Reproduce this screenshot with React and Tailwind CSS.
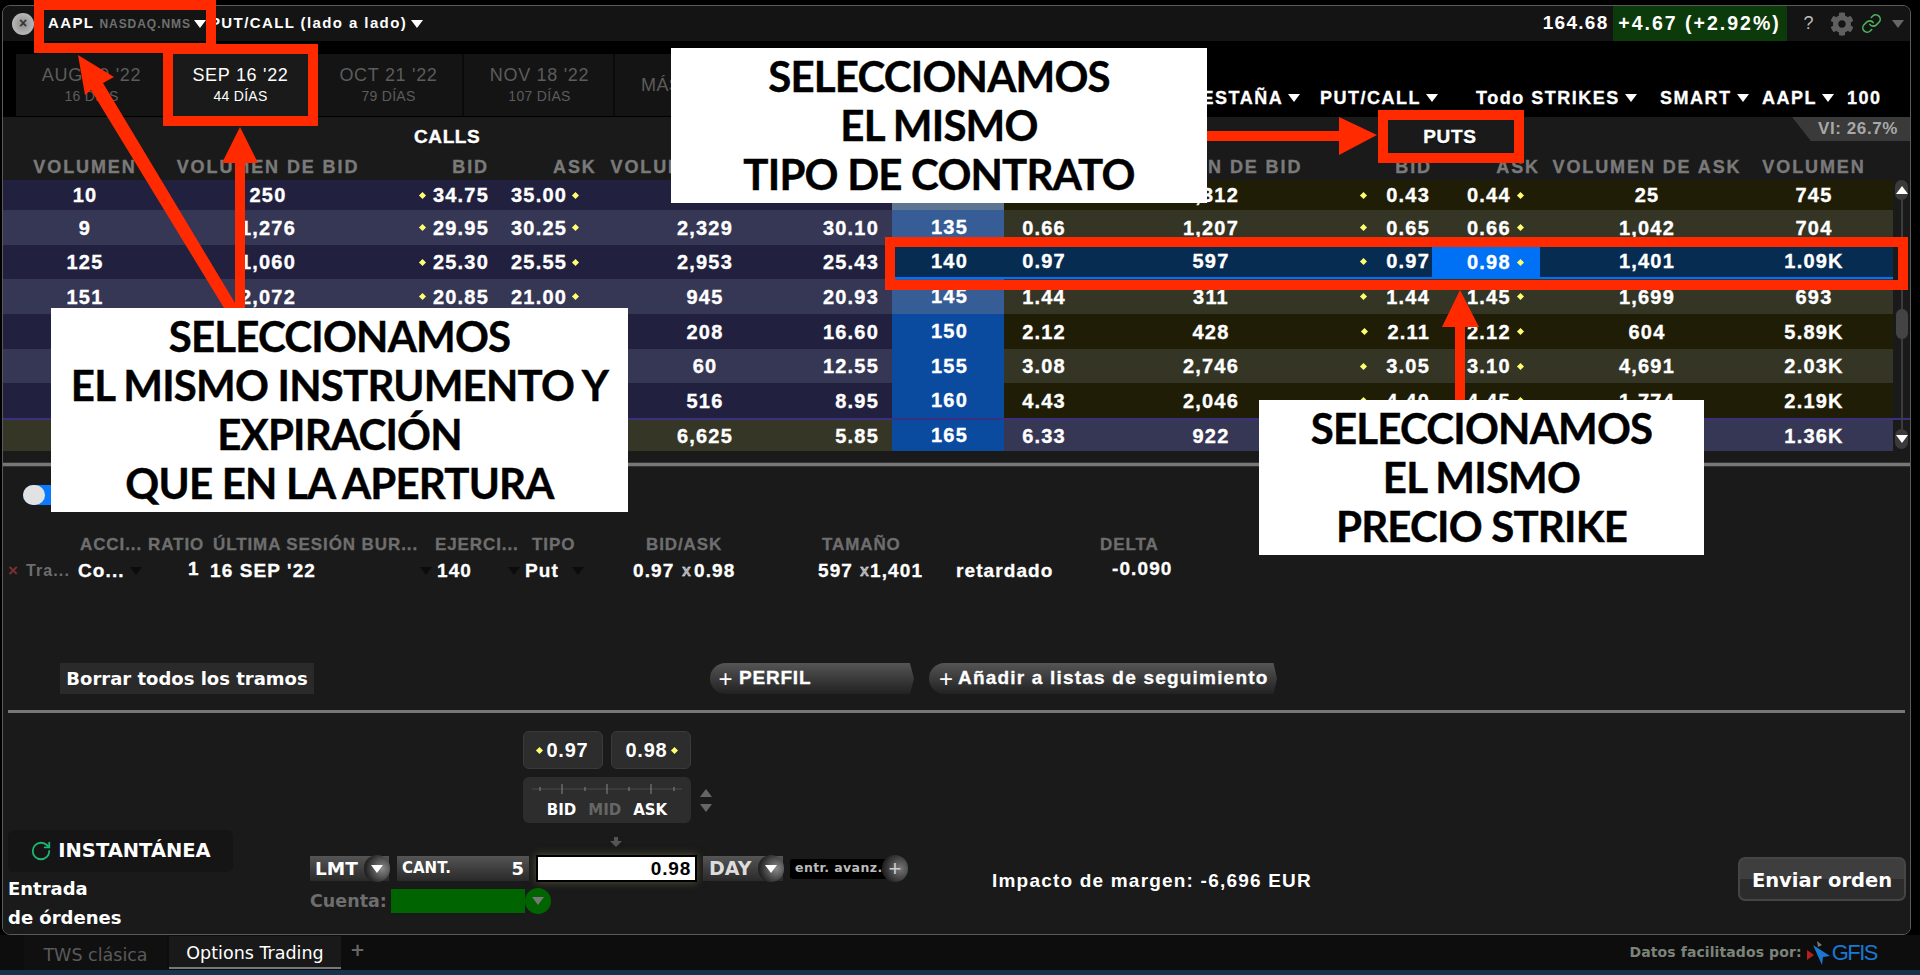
import React from 'react';
import { RotateCw, Link as LinkIcon } from 'lucide-react';
import { FaCog } from 'react-icons/fa';

const GRID = 'grid grid-cols-[164px_202px_120px_101px_230px_72px_112px_80px_254px_94px_108px_214px_139px]';
const DEJA = "[font-family:'DejaVu_Sans',sans-serif]";

const rows = [
  { h: 'h-[30px]', c: 'bg-[#21213f]', st: 'bg-[#5e7591]', p: 'bg-[#1f1d06]', v: '10', vb: '250', b: '34.75', a: '35.00', va: '', l: '', s: '', pl: '', pvb: '1,312', pb: '0.43', pa: '0.44', pva: '25', pv: '745' },
  { h: 'h-[35px]', c: 'bg-[#363655]', st: 'bg-[#375d96]', p: 'bg-[#353526]', v: '9', vb: '1,276', b: '29.95', a: '30.25', va: '2,329', l: '30.10', s: '135', pl: '0.66', pvb: '1,207', pb: '0.65', pa: '0.66', pva: '1,042', pv: '704' },
  { h: 'h-[34px]', sel: true, c: 'bg-[#21213f]', st: 'bg-[#062c52]', p: 'bg-[#062c52]', v: '125', vb: '1,060', b: '25.30', a: '25.55', va: '2,953', l: '25.43', s: '140', pl: '0.97', pvb: '597', pb: '0.97', pa: '0.98', pva: '1,401', pv: '1.09K' },
  { h: 'h-[35px]', c: 'bg-[#363655]', st: 'bg-[#375d96]', p: 'bg-[#353526]', v: '151', vb: '2,072', b: '20.85', a: '21.00', va: '945', l: '20.93', s: '145', pl: '1.44', pvb: '311', pb: '1.44', pa: '1.45', pva: '1,699', pv: '693' },
  { h: 'h-[35px]', c: 'bg-[#21213f]', st: 'bg-[#0a4a9f]', p: 'bg-[#1f1d06]', v: '', vb: '', b: '', a: '', va: '208', l: '16.60', s: '150', pl: '2.12', pvb: '428', pb: '2.11', pa: '2.12', pva: '604', pv: '5.89K' },
  { h: 'h-[34px]', c: 'bg-[#363655]', st: 'bg-[#0a4a9f]', p: 'bg-[#353526]', v: '', vb: '', b: '', a: '', va: '60', l: '12.55', s: '155', pl: '3.08', pvb: '2,746', pb: '3.05', pa: '3.10', pva: '4,691', pv: '2.03K' },
  { h: 'h-[35px]', c: 'bg-[#21213f]', st: 'bg-[#0a4a9f]', p: 'bg-[#1f1d06]', v: '', vb: '', b: '', a: '', va: '516', l: '8.95', s: '160', pl: '4.43', pvb: '2,046', pb: '4.40', pa: '4.45', pva: '1,774', pv: '2.19K' },
  { h: 'h-[31px]', last: true, c: 'bg-[#363626]', st: 'bg-[#0a4a9f]', p: 'bg-[#363655]', v: '', vb: '', b: '', a: '', va: '6,625', l: '5.85', s: '165', pl: '6.33', pvb: '922', pb: '', pa: '', pva: '', pv: '1.36K' },
];

function Tri({ color = 'border-t-white', cls = '' }) {
  return <span className={`inline-block w-0 h-0 border-x-[6px] border-x-transparent border-t-[8px] ${color} ${cls}`} />;
}

function Dia() {
  return <span className="inline-block w-[5px] h-[5px] rotate-45 bg-[#ffff70] shrink-0" />;
}

function Row({ r }) {
  const cell = 'flex items-center h-full';
  const selLine = r.sel ? 'border-b-[2px] border-b-[#0070ff]' : '';
  const callCell = r.c;
  return (
    <div className={`${GRID} ${r.h} text-white font-bold text-[20px] tracking-[1.2px] [-webkit-text-stroke:0.35px_#fff] ${r.last ? 'border-t-[2px] border-t-[#3b2f80]' : ''}`}>
      <div className={`${cell} ${callCell} justify-center`}>{r.v}</div>
      <div className={`${cell} ${callCell} justify-center`}>{r.vb}</div>
      <div className={`${cell} ${callCell} justify-end gap-[8px]`}>{r.b && <Dia />}<span>{r.b}</span></div>
      <div className={`${cell} ${callCell} pl-[22px] gap-[6px]`}><span>{r.a}</span>{r.a && <Dia />}</div>
      <div className={`${cell} ${callCell} justify-center`}>{r.va}</div>
      <div className={`${cell} ${callCell} justify-end pr-[13px]`}>{r.l}</div>
      <div className={`${cell} ${r.st} ${selLine} justify-center pb-[1px] pl-[3px]`}>{r.s}</div>
      <div className={`${cell} ${r.p} ${selLine} justify-center`}>{r.pl}</div>
      <div className={`${cell} ${r.p} ${selLine} justify-center`}>{r.pvb}</div>
      <div className={`${cell} ${r.p} ${selLine} justify-end gap-[20px] pr-[2px]`}>{r.pb && <Dia />}<span>{r.pb}</span></div>
      <div className={`${cell} ${r.sel ? 'bg-[#0070f5]' : r.p} pl-[35px] gap-[7px]`}><span>{r.pa}</span>{r.pa && <Dia />}</div>
      <div className={`${cell} ${r.p} ${selLine} justify-center`}>{r.pva}</div>
      <div className={`${cell} ${r.p} ${selLine} justify-center pr-[19px]`}>{r.pv}</div>
    </div>
  );
}

function Tab({ a, b, active }) {
  return (
    <div className={`h-full flex flex-col items-center justify-center font-normal border-r-[2px] border-r-[#0a0a0a] ${active ? 'w-[146px] bg-[#1a1a1a] text-white pl-[3px]' : 'w-[151px] bg-[#141414] text-[#5c5c5c] pl-[2px]'}`}>
      <div className="text-[18px] leading-[22px] tracking-[0.7px]">{a}</div>
      <div className="text-[14px] leading-[20px] tracking-[0.3px]">{b}</div>
    </div>
  );
}

function Filter({ text, w, arrow = true }) {
  return (
    <div className={`flex items-center gap-[5px] ${w}`}>
      <span>{text}</span>
      {arrow && <Tri cls="border-x-[5px] border-t-[6px]" />}
    </div>
  );
}

function Callout({ cls, lines }) {
  return (
    <div className={`absolute bg-white text-black flex flex-col items-center justify-center text-center [font-family:Lato,sans-serif] font-bold text-[42px] leading-[49px] tracking-[-0.8px] [-webkit-text-stroke:0.4px_#000] ${cls}`}>
      {lines.map((l) => <div key={l} className="whitespace-nowrap">{l}</div>)}
    </div>
  );
}

function RedBox({ cls }) {
  return <div className={`absolute border-[10px] border-[#ff2a00] ${cls}`} />;
}

function RoundDrop({ cls = 'bg-[radial-gradient(circle_at_70%_50%,#8a8a8a,#222_75%)]', tri = 'border-t-white' }) {
  return (
    <span className={`absolute right-[-1px] top-[-1px] w-[26px] h-[27px] rounded-full flex items-center justify-center ${cls}`}>
      <Tri color={tri} />
    </span>
  );
}

export default function App() {
  return (
    <div className="relative w-[1920px] h-[975px] bg-black overflow-hidden pt-[5px] [font-family:'Liberation_Sans',sans-serif]">
      <div className="ml-[2px] w-[1909px] h-[930px] border border-[#5a5a5a] rounded-[8px] overflow-hidden bg-[#1a1a1a]">
        {/* title bar */}
        <div className="h-[35px] bg-[#141414] flex items-center pr-[6px] text-white font-bold text-[15px] tracking-[1.4px]">
          <div className="ml-[9px] w-[22px] h-[22px] rounded-full bg-[radial-gradient(circle,#8d8d8d,#c9c9c9)] flex items-center justify-center text-[#333] text-[14px] font-bold tracking-normal">×</div>
          <span className="ml-[14px]">AAPL</span>
          <span className="ml-[5px] text-[12px] text-[#6f6f6f] tracking-[0.95px]">NASDAQ.NMS</span>
          <Tri cls="ml-[3px] border-x-[5px] border-t-[6px]" />
          <span className="ml-[4px]">PUT/CALL (lado a lado)</span>
          <Tri cls="ml-[4px] border-x-[5px] border-t-[6px]" />
          <span className="ml-auto text-[19px] tracking-[1.3px]">164.68</span>
          <span className="ml-[4px] h-full w-[174px] bg-[#0d3a0a] flex items-center justify-center text-[19.5px] tracking-[2px] whitespace-nowrap">+4.67 (+2.92%)</span>
          <span className="ml-[17px] text-[#bdbdbd] font-normal text-[18px]">?</span>
          <FaCog className="ml-[15px] text-[#5f5f5f]" size={24} />
          <LinkIcon className="ml-[7px] text-[#4fb35a]" size={21} strokeWidth={1.8} />
          <Tri color="border-t-[#666]" cls="ml-[10px] border-x-[4px] border-t-[6px]" />
        </div>
        {/* toolbar */}
        <div className="h-[76px] bg-black flex items-start text-white font-bold text-[18px] tracking-[1.5px]">
          <div className="mt-[13px] h-[62px] flex pl-[13px] shrink-0">
            <Tab a="AUG 19 '22" b="16 DÍAS" />
            <Tab a="SEP 16 '22" b="44 DÍAS" active />
            <Tab a="OCT 21 '22" b="79 DÍAS" />
            <Tab a="NOV 18 '22" b="107 DÍAS" />
            <div className="w-[100px] h-full bg-[#141414] text-[#5c5c5c] flex items-center pl-[26px] font-normal text-[18px] tracking-[0.4px]">MÁS</div>
          </div>
          <div className="flex-1 flex items-center mt-[47px] h-[20px] pl-[473px] whitespace-nowrap [-webkit-text-stroke:0.3px_#fff]">
            <Filter text="PESTAÑA" w="w-[132px]" />
            <Filter text="PUT/CALL" w="w-[156px]" />
            <Filter text="Todo STRIKES" w="w-[184px]" />
            <Filter text="SMART" w="w-[102px]" />
            <Filter text="AAPL" w="w-[85px]" />
            <span>100</span>
          </div>
        </div>
        {/* header */}
        <div className="relative h-[63px] bg-[#1a1a1a] font-bold">
          <div className="flex h-[37px] pt-[3px] items-center text-white text-[19px] tracking-[0.6px] [-webkit-text-stroke:0.4px_#fff] [text-shadow:0_1px_1px_#000]">
            <span className="ml-[411px]">CALLS</span>
            <span className="ml-[943px]">PUTS</span>
          </div>
          <div className="absolute right-0 top-0 h-[24px] w-[118px] bg-[#3a3a3a] [clip-path:polygon(0_0,100%_0,100%_100%,16%_100%)] flex items-center justify-end pr-[12px] text-[#a8a8a8] text-[17px] tracking-[0.6px]">VI: 26.7%</div>
          <div className={`${GRID} h-[26px] items-center text-[#7a7a7a] text-[18px] tracking-[1.9px] whitespace-nowrap [-webkit-text-stroke:0.35px_#7a7a7a]`}>
            <div className="text-center">VOLUMEN</div>
            <div className="text-center">VOLUMEN DE BID</div>
            <div className="text-right">BID</div>
            <div className="text-right overflow-visible"><span className="ml-[64px]">ASK</span></div>
            <div className="text-center">VOLUMEN DE ASK</div>
            <div />
            <div />
            <div />
            <div className="text-center">VOLUMEN DE BID</div>
            <div className="text-right">BID</div>
            <div className="text-right">ASK</div>
            <div className="text-center">VOLUMEN DE ASK</div>
            <div className="text-center pr-[19px]">VOLUMEN</div>
          </div>
        </div>
        {/* rows + scroll */}
        <div className="relative">
          {rows.map((r, i) => <Row key={i} r={r} />)}
          <div className="absolute right-[1px] top-0 bottom-0 w-[15px] flex flex-col items-center">
            <span className="w-[13px] h-[20px] rounded-full bg-[#3a3a3a] flex items-center justify-center"><Tri color="border-t-white" cls="rotate-180 border-x-[4px] border-t-[6px]" /></span>
            <span className="flex-1 w-[2px] bg-[#3c3c3c] relative">
              <span className="absolute left-[-5px] top-[109px] w-[12px] h-[30px] rounded-full bg-[#444]" />
            </span>
            <span className="w-[13px] h-[20px] rounded-full bg-[#3a3a3a] flex items-center justify-center"><Tri color="border-t-white" cls="border-x-[4px] border-t-[6px]" /></span>
          </div>
        </div>
        <div className="h-[13px] bg-[#1a1a1a]" />
        <div className="h-[5px] bg-[#777] border-t border-b border-[#333]" />

        {/* legs panel */}
        <div className="h-[243px] bg-[#1a1a1a] font-bold flex flex-col">
          <div className="h-[20px] mt-[18px] ml-[20px] w-[40px] rounded-full bg-[#0a7bff] relative">
            <span className="absolute left-0 top-0 w-[22px] h-[20px] rounded-full bg-[#e2e2e2]" />
          </div>
          <div className="flex mt-[30px] h-[20px] items-center text-[#6e6e6e] text-[17px] tracking-[0.9px] whitespace-nowrap pl-[77px] [-webkit-text-stroke:0.3px_#6e6e6e]">
            <span className="w-[68px]">ACCI...</span>
            <span className="w-[65px]">RATIO</span>
            <span className="w-[222px]">ÚLTIMA SESIÓN BUR...</span>
            <span className="w-[97px]">EJERCI...</span>
            <span className="w-[114px]">TIPO</span>
            <span className="w-[176px]">BID/ASK</span>
            <span className="w-[278px]">TAMAÑO</span>
            <span>DELTA</span>
          </div>
          <div className="flex mt-[6px] h-[20px] items-center text-white text-[19px] tracking-[1.1px] whitespace-nowrap pl-[5px] [-webkit-text-stroke:0.3px_#fff]">
            <span className="w-[18px] text-[#7d2f36] text-[17px] [-webkit-text-stroke:0px]">×</span>
            <span className="w-[52px] text-[#6e6e6e] text-[16px] [-webkit-text-stroke:0px]">Tra...</span>
            <span className="w-[52px]">Co...</span>
            <Tri color="border-t-[#0c0c0c]" />
            <span className="ml-[46px] w-[22px] -mt-[3px]">1</span>
            <span className="w-[210px]">16 SEP '22</span>
            <Tri color="border-t-[#0c0c0c]" />
            <span className="ml-[5px] w-[71px]">140</span>
            <Tri color="border-t-[#0c0c0c]" />
            <span className="ml-[5px] w-[47px]">Put</span>
            <Tri color="border-t-[#0c0c0c]" />
            <span className="ml-[49px] w-[47px]">0.97</span>
            <span className="w-[14px] text-[16px] text-[#aaa] text-center">x</span>
            <span className="w-[124px]">0.98</span>
            <span className="w-[42px]">597</span>
            <span className="w-[10px] text-[16px] text-[#aaa] text-center">x</span>
            <span className="w-[86px]">1,401</span>
            <span className="w-[156px]">retardado</span>
            <span className="-mt-[3px]">-0.090</span>
          </div>
          <div className="flex items-center mt-[82px] h-[31px]">
            <button className={`ml-[57px] w-[254px] h-full bg-[#2a2a2a] text-white text-[18px] ${DEJA} font-bold whitespace-nowrap`}>Borrar todos los tramos</button>
            <div className="ml-[396px] w-[204px] h-full rounded-l-full bg-gradient-to-b from-[#555] to-[#222] [clip-path:polygon(0_0,98%_0,100%_50%,98%_100%,0_100%)] flex items-center text-white text-[19px] tracking-[0.8px] pl-[4px] [-webkit-text-stroke:0.3px_#fff]">
              <span className="font-normal text-[24px] w-[24px] text-center [-webkit-text-stroke:0px]">+</span><span className="ml-[1px]">PERFIL</span>
            </div>
            <div className="ml-[15px] w-[348px] h-full rounded-l-full bg-gradient-to-b from-[#555] to-[#222] [clip-path:polygon(0_0,99%_0,100%_50%,99%_100%,0_100%)] flex items-center text-white text-[19px] tracking-[1.2px] pl-[5px] whitespace-nowrap [-webkit-text-stroke:0.3px_#fff]">
              <span className="font-normal text-[24px] w-[24px] text-center tracking-normal [-webkit-text-stroke:0px]">+</span><span>Añadir a listas de seguimiento</span>
            </div>
          </div>
        </div>
        <div className="h-[3px] mx-[5px] bg-[#777]" />

        {/* order panel */}
        <div className="h-[221px] flex bg-[#1a1a1a]">
          <div className={`ml-[5px] w-[225px] pt-[117px] text-white font-bold ${DEJA}`}>
            <div className="w-[225px] h-[42px] rounded-[6px] bg-[#151515] flex items-center justify-center gap-[6px] text-[19.5px] whitespace-nowrap">
              <RotateCw className="text-[#1db56f]" size={22} strokeWidth={2} />
              <span>INSTANTÁNEA</span>
            </div>
            <div className="mt-[2px] text-[18px] leading-[29px]">Entrada<br />de órdenes</div>
          </div>
          <div className="ml-[77px] w-[682px] pt-[18px] font-bold">
            <div className="ml-[213px] flex gap-[8px]">
              <div className="w-[80px] h-[38px] rounded-[6px] bg-[#2d2d2d] border border-[#3a3a3a] flex items-center justify-center gap-[4px] text-white text-[20px] tracking-[0.8px]"><Dia /><span>0.97</span></div>
              <div className="w-[80px] h-[38px] rounded-[6px] bg-[#2d2d2d] border border-[#3a3a3a] flex items-center justify-center gap-[4px] text-white text-[20px] tracking-[0.8px]"><span>0.98</span><Dia /></div>
            </div>
            <div className="ml-[213px] mt-[8px] flex items-center gap-[9px]">
              <div className="w-[168px] h-[46px] rounded-[6px] bg-[#2d2d2d] flex flex-col items-center pt-[6px]">
                <svg width="150" height="12" viewBox="0 0 150 12">
                  <path d="M0 6H150" stroke="#111" strokeWidth="2" />
                  <path d="M0 6H150" stroke="#666" strokeWidth="1" />
                  <path d="M8 4v4M30 1v10M53 4v4M75 1v10M97 4v4M119 1v10M142 4v4" stroke="#888" strokeWidth="1" />
                </svg>
                <div className={`mt-[4px] flex gap-[12px] text-[15px] text-white ${DEJA}`}>
                  <span>BID</span><span className="text-[#666]">MID</span><span>ASK</span>
                </div>
              </div>
              <div className="flex flex-col gap-[7px]">
                <Tri color="border-t-[#666]" cls="rotate-180" />
                <Tri color="border-t-[#666]" />
              </div>
            </div>
            <div className="ml-[300px] mt-[14px] h-[10px] flex justify-center w-[12px]">
              <svg width="12" height="10" viewBox="0 0 12 10"><path d="M4 0h4v4h4L6 10 0 4h4z" fill="#555" /></svg>
            </div>
            <div className="mt-[8px] flex items-center h-[27px] text-white">
              <div className={`relative w-[79px] h-[25px] bg-gradient-to-b from-[#555] to-[#2a2a2a] flex items-center pl-[5px] text-[18.5px] ${DEJA}`}>
                LMT<RoundDrop />
              </div>
              <div className={`ml-[8px] w-[132px] h-[25px] bg-gradient-to-b from-[#555] to-[#2a2a2a] flex items-center justify-between px-[5px] text-[15px] ${DEJA}`}>
                <span>CANT.</span><span className="text-[18px]">5</span>
              </div>
              <div className="ml-[7px] w-[161px] h-[27px] bg-white border-[2px] border-black shadow-[0_0_8px_#55553a] text-black text-right pr-[4px] text-[19px] tracking-[0.8px] leading-[23px]">0.98</div>
              <div className={`relative ml-[6px] w-[80px] h-[25px] bg-gradient-to-b from-[#555] to-[#2a2a2a] flex items-center pl-[6px] text-[19px] text-[#ddd] ${DEJA}`}>
                DAY<RoundDrop />
              </div>
              <div className="relative ml-[7px] w-[118px] h-[25px] flex items-center">
                <span className={`w-[97px] h-[20px] bg-black rounded-[3px] flex items-center pl-[5px] text-[12.5px] text-[#bbb] tracking-[0.4px] whitespace-nowrap ${DEJA}`}>entr. avanz.</span>
                <span className="absolute left-[92px] top-[-1px] w-[26px] h-[27px] rounded-full bg-[radial-gradient(circle_at_70%_50%,#777,#222_75%)] flex items-center justify-center text-[#ccc] font-normal text-[22px]">+</span>
              </div>
            </div>
            <div className="mt-[7px] flex items-center h-[24px]">
              <span className={`w-[81px] text-[#6e6e6e] text-[17.5px] ${DEJA}`}>Cuenta:</span>
              <div className="relative w-[134px] h-[24px] bg-[#006400] overflow-visible">
                <span className="absolute right-[-26px] top-[-1px] w-[26px] h-[26px] rounded-full bg-[#006400] flex items-center justify-center"><Tri color="border-t-[#777]" /></span>
              </div>
            </div>
          </div>
          <div className="pt-[154px] text-white font-bold text-[19px] tracking-[1.2px] whitespace-nowrap">Impacto de margen: -6,696 EUR</div>
          <div className="ml-auto mr-[4px] pt-[144px]">
            <button className={`w-[168px] h-[44px] pt-[3px] rounded-[7px] border-[2px] border-[#454545] bg-[linear-gradient(#3e3e3e_50%,#2c2c2c_50%)] text-white font-bold text-[19.5px] whitespace-nowrap ${DEJA}`}>Enviar orden</button>
          </div>
        </div>
      </div>

      {/* bottom tabs */}
      <div className={`h-[35px] bg-[#0d0d0d] flex items-center ${DEJA} text-[17.5px]`}>
        <div className="ml-[24px] w-[143px] h-full pt-[5px] flex items-center justify-center bg-[#101010] text-[#5a5a5a]">TWS clásica</div>
        <div className="ml-[2px] w-[172px] h-[33px] pt-[4px] flex items-center justify-center bg-[#191919] text-white border-b-[2px] border-b-[#777]">Options Trading</div>
        <span className="ml-[9px] -mt-[6px] text-[#666] font-bold text-[18px]">+</span>
        <div className="ml-auto mr-[43px] flex items-center">
          <span className="text-[#7b837b] font-bold text-[14px] tracking-[0.1px]">Datos facilitados por:</span>
          <svg className="ml-[5px]" width="24" height="24" viewBox="0 0 24 24">
            <path d="M0 9l7 5-7 5z" fill="#b5201f" />
            <path d="M10 0l5 4-4 2z" fill="#777" />
            <path d="M6 4l17 11-7 1-1 8z" fill="#1a77d2" />
          </svg>
          <span className="ml-[1px] text-[#1a77d2] text-[22px] tracking-[-1.5px] [font-family:'Liberation_Sans',sans-serif]">GFIS</span>
        </div>
      </div>
      <div className="h-[5px] bg-[#14334d]" />

      {/* annotation layer */}
      <div className="absolute inset-0 pointer-events-none">
        <RedBox cls="left-[34px] top-0 w-[182px] h-[53px]" />
        <RedBox cls="left-[163px] top-[44px] w-[155px] h-[82px]" />
        <RedBox cls="left-[1378px] top-[110px] w-[146px] h-[53px]" />
        <RedBox cls="left-[885px] top-[237px] w-[1023px] h-[53px]" />
        <svg className="absolute left-0 top-0" width="1920" height="975" viewBox="0 0 1920 975">
          <path d="M78 55L114 77L103 83L238 308L224 308L91 90L85 95Z" fill="#ff2a00" />
          <path d="M240 127L258 163L245 163V308H235V163H222Z" fill="#ff2a00" />
          <path d="M1377 135L1339 117V131H1207V141H1339V155Z" fill="#ff2a00" />
          <path d="M1460 290L1479 327H1465V400H1455V327H1442Z" fill="#ff2a00" />
        </svg>
        <Callout cls="left-[671px] top-[48px] w-[536px] h-[155px]" lines={['SELECCIONAMOS', 'EL MISMO', 'TIPO DE CONTRATO']} />
        <Callout cls="left-[51px] top-[308px] w-[577px] h-[204px]" lines={['SELECCIONAMOS', 'EL MISMO INSTRUMENTO Y', 'EXPIRACIÓN', 'QUE EN LA APERTURA']} />
        <Callout cls="left-[1259px] top-[400px] w-[445px] h-[155px]" lines={['SELECCIONAMOS', 'EL MISMO', 'PRECIO STRIKE']} />
      </div>
    </div>
  );
}
